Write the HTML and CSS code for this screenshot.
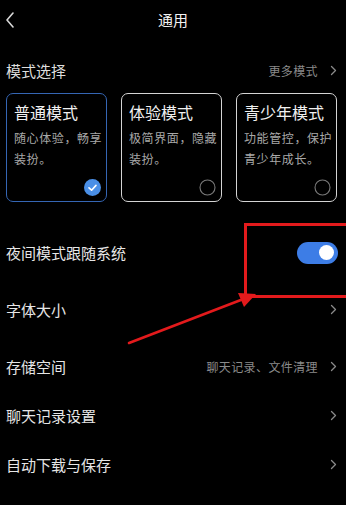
FILE: index.html
```html
<!DOCTYPE html>
<html lang="zh-CN">
<head>
<meta charset="utf-8">
<link rel="stylesheet" href="styles.css">
</head>
<body>
<div class="page">
  <header class="topbar">
    <svg class="back" width="10" height="16" viewBox="0 0 10 16"><polyline points="8,1 2,8 8,15" fill="none" stroke="#d8d8d8" stroke-width="1.6" stroke-linecap="round" stroke-linejoin="round"/></svg>
    <div class="title">通用</div>
  </header>

  <div class="section-head">
    <span class="section-title">模式选择</span>
    <span class="more">更多模式<svg class="chev" width="7" height="11" viewBox="0 0 7 11"><polyline points="1.5,1.5 5.5,5.5 1.5,9.5" fill="none" stroke="#8a8a8a" stroke-width="1.3" stroke-linecap="round" stroke-linejoin="round"/></svg></span>
  </div>

  <div class="cards">
    <div class="card active">
      <div class="card-title">普通模式</div>
      <div class="card-desc">随心体验，畅享<br>装扮。</div>
      <svg class="mark" width="17" height="17" viewBox="0 0 17 17"><circle cx="8.5" cy="8.5" r="8.5" fill="#4a8fe6"/><polyline points="5,8.8 7.6,11.2 12,6.4" fill="none" stroke="#fff" stroke-width="1.6" stroke-linecap="round" stroke-linejoin="round"/></svg>
    </div>
    <div class="card">
      <div class="card-title">体验模式</div>
      <div class="card-desc">极简界面，隐藏<br>装扮。</div>
      <svg class="mark" width="17" height="17" viewBox="0 0 17 17"><circle cx="8.5" cy="8.5" r="7.5" fill="none" stroke="#7a7a7a" stroke-width="1.1"/></svg>
    </div>
    <div class="card">
      <div class="card-title">青少年模式</div>
      <div class="card-desc">功能管控，保护<br>青少年成长。</div>
      <svg class="mark" width="17" height="17" viewBox="0 0 17 17"><circle cx="8.5" cy="8.5" r="7.5" fill="none" stroke="#7a7a7a" stroke-width="1.1"/></svg>
    </div>
  </div>

  <div class="row tall">
    <span class="label">夜间模式跟随系统</span>
    <span class="toggle"><span class="knob"></span></span>
  </div>
  <div class="row tall">
    <span class="label">字体大小</span>
    <svg class="chev-row" width="7" height="11" viewBox="0 0 7 11"><polyline points="1.5,1.5 5.5,5.5 1.5,9.5" fill="none" stroke="#8a8a8a" stroke-width="1.3" stroke-linecap="round" stroke-linejoin="round"/></svg>
  </div>
  <div class="row gap-top">
    <span class="label">存储空间</span>
    <span class="value">聊天记录、文件清理<svg class="chev" width="7" height="11" viewBox="0 0 7 11"><polyline points="1.5,1.5 5.5,5.5 1.5,9.5" fill="none" stroke="#8a8a8a" stroke-width="1.3" stroke-linecap="round" stroke-linejoin="round"/></svg></span>
  </div>
  <div class="row">
    <span class="label">聊天记录设置</span>
    <svg class="chev-row" width="7" height="11" viewBox="0 0 7 11"><polyline points="1.5,1.5 5.5,5.5 1.5,9.5" fill="none" stroke="#8a8a8a" stroke-width="1.3" stroke-linecap="round" stroke-linejoin="round"/></svg>
  </div>
  <div class="row">
    <span class="label">自动下载与保存</span>
    <svg class="chev-row" width="7" height="11" viewBox="0 0 7 11"><polyline points="1.5,1.5 5.5,5.5 1.5,9.5" fill="none" stroke="#8a8a8a" stroke-width="1.3" stroke-linecap="round" stroke-linejoin="round"/></svg>
  </div>

  <svg class="annot" width="346" height="505" viewBox="0 0 346 505">
    <polyline points="350,224.5 245.5,224.5 245.5,296.5 350,296.5" fill="none" stroke="#e31a1c" stroke-width="3"/>
    <line x1="129" y1="343" x2="246" y2="298" stroke="#e31a1c" stroke-width="2.6" stroke-linecap="round"/>
    <polygon points="256,294 238,293 244,307" fill="#e31a1c"/>
  </svg>
</div>
</body>
</html>
```
FILE: styles.css
```css
html, body {
  margin: 0;
  padding: 0;
  background: #000;
}
body {
  font-family: "Noto Sans CJK SC", "Noto Sans", sans-serif;
  color: #e6e6e6;
}
.page {
  position: relative;
  width: 346px;
  height: 505px;
  overflow: hidden;
  background: #000;
}
.topbar {
  height: 40px;
  display: flex;
  align-items: center;
  justify-content: center;
  position: relative;
}
.back {
  position: absolute;
  left: 5px;
  top: 12px;
}
.title {
  font-size: 15px;
  color: #f2f2f2;
  line-height: 20px;
}
.section-head {
  margin-top: 15px;
  height: 30px;
  display: flex;
  align-items: center;
  justify-content: space-between;
  padding: 0 9px 0 6px;
}
.section-title {
  font-size: 15px;
  color: #dedede;
}
.more, .value {
  font-size: 12px;
  letter-spacing: 0.4px;
  color: #8a8a8a;
  display: flex;
  align-items: center;
}
.chev {
  margin-left: 12px;
}
.cards {
  margin-top: 8px;
  display: flex;
  gap: 14px;
  padding-left: 6px;
}
.card {
  box-sizing: border-box;
  width: 101px;
  height: 109px;
  border: 1.5px solid #d4d4d4;
  border-radius: 7px;
  padding: 6px 0 0 7px;
  display: flex;
  flex-direction: column;
}
.card.active {
  border-color: #3566b4;
}
.card-title {
  font-size: 16px;
  line-height: 24px;
  color: #f0f0f0;
  white-space: nowrap;
}
.card-desc {
  margin-top: 3px;
  font-size: 12px;
  letter-spacing: 0.6px;
  line-height: 21px;
  color: #a8a8a8;
  white-space: nowrap;
}
.mark {
  margin-top: auto;
  margin-bottom: 5px;
  margin-right: 5px;
  align-self: flex-end;
}
.row {
  height: 49px;
  display: flex;
  align-items: center;
  justify-content: space-between;
  padding: 0 9px 0 6px;
}
.row.tall {
  height: 57px;
}
.cards + .row {
  margin-top: 22px;
}
.row.gap-top {
  margin-top: 4px;
}
.label {
  font-size: 15px;
  color: #e6e6e6;
}
.toggle {
  width: 41px;
  height: 22px;
  border-radius: 11px;
  background: #3d7de6;
  display: flex;
  align-items: center;
  justify-content: flex-end;
  padding-right: 4px;
  box-sizing: border-box;
  margin-right: -1px;
}
.knob {
  width: 15px;
  height: 15px;
  border-radius: 50%;
  background: #fff;
}
.annot {
  position: absolute;
  left: 0;
  top: 0;
  pointer-events: none;
}
```
